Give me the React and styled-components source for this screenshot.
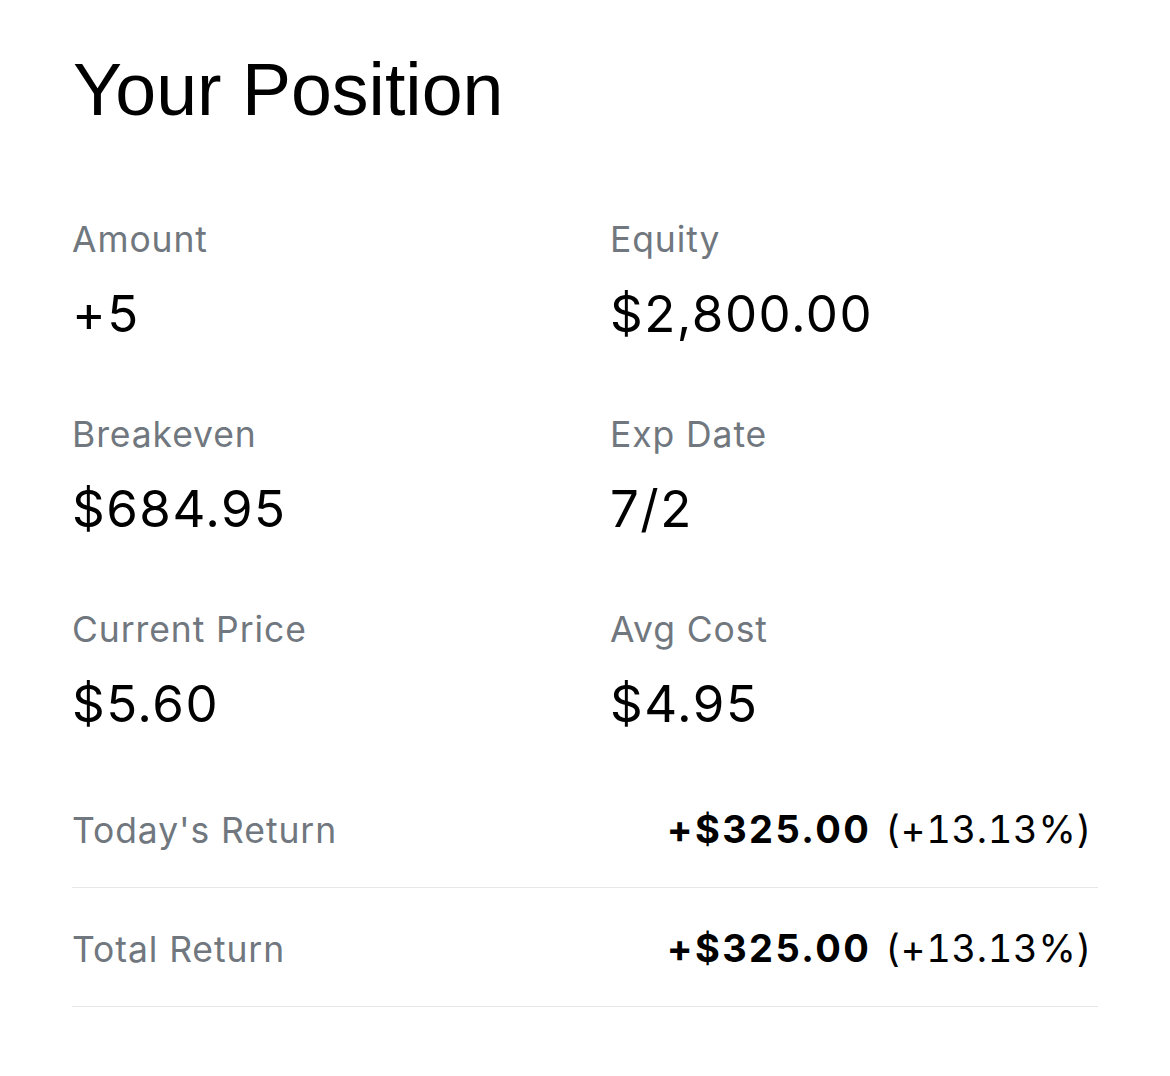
import React from 'react';
import styled, { createGlobalStyle } from 'styled-components';

const GlobalStyle = createGlobalStyle`
  html, body {
    margin: 0;
    padding: 0;
    background: #FFFFFF;
  }
  body {
    font-family: 'Liberation Sans', Arial, sans-serif;
    color: #000000;
  }
`;

const Page = styled.div`
  width: 1025px;
  padding: 54px 0 0 73px;
`;

const Title = styled.h1`
  margin: 0;
  font-size: 73.5px;
  font-weight: 400;
  line-height: 72px;
  color: #000000;
`;

const StatsGrid = styled.div`
  display: grid;
  grid-template-columns: 538px 1fr;
  row-gap: 69px;
  margin: 92px 0 0 -1px;
`;

const Stat = styled.div`
  display: flex;
  flex-direction: column;
  gap: 22px;
`;

const Label = styled.div`
  font-family: Inter, 'Liberation Sans', sans-serif;
  font-size: 35.5px;
  line-height: 44px;
  letter-spacing: 0.9px;
  color: #70777e;
`;

const Value = styled.div`
  font-family: Inter, 'Liberation Sans', sans-serif;
  font-size: 51px;
  line-height: 60px;
  letter-spacing: 1.5px;
  color: #000000;
`;

const Returns = styled.div`
  margin-top: 35px;
  margin-left: -1px;
`;

const ReturnRow = styled.div`
  display: flex;
  justify-content: space-between;
  align-items: baseline;
  padding: 38px 6px 34px 0;
  border-bottom: 1px solid #e6e7e9;
`;

const ReturnValue = styled.div`
  display: flex;
  align-items: baseline;
  gap: 14px;
  font-family: Inter, 'Liberation Sans', sans-serif;
  font-size: 38px;
  line-height: 44px;
  color: #000000;
`;

const Amount = styled.span`
  font-weight: 700;
  letter-spacing: 2.4px;
`;

const Percent = styled.span`
  font-feature-settings: 'tnum';
  letter-spacing: 0.7px;
`;

const stats = [
  { label: 'Amount', value: '+5' },
  { label: 'Equity', value: '$2,800.00' },
  { label: 'Breakeven', value: '$684.95' },
  { label: 'Exp Date', value: '7/2' },
  { label: 'Current Price', value: '$5.60' },
  { label: 'Avg Cost', value: '$4.95' },
];

const returns = [
  { label: "Today's Return", amount: '+$325.00', percent: '(+13.13%)' },
  { label: 'Total Return', amount: '+$325.00', percent: '(+13.13%)' },
];

export default function App() {
  return (
    <>
      <GlobalStyle />
      <Page>
        <Title>Your Position</Title>
        <StatsGrid>
          {stats.map((s) => (
            <Stat key={s.label}>
              <Label>{s.label}</Label>
              <Value>{s.value}</Value>
            </Stat>
          ))}
        </StatsGrid>
        <Returns>
          {returns.map((r) => (
            <ReturnRow key={r.label}>
              <Label>{r.label}</Label>
              <ReturnValue>
                <Amount>{r.amount}</Amount>
                <Percent>{r.percent}</Percent>
              </ReturnValue>
            </ReturnRow>
          ))}
        </Returns>
      </Page>
    </>
  );
}
